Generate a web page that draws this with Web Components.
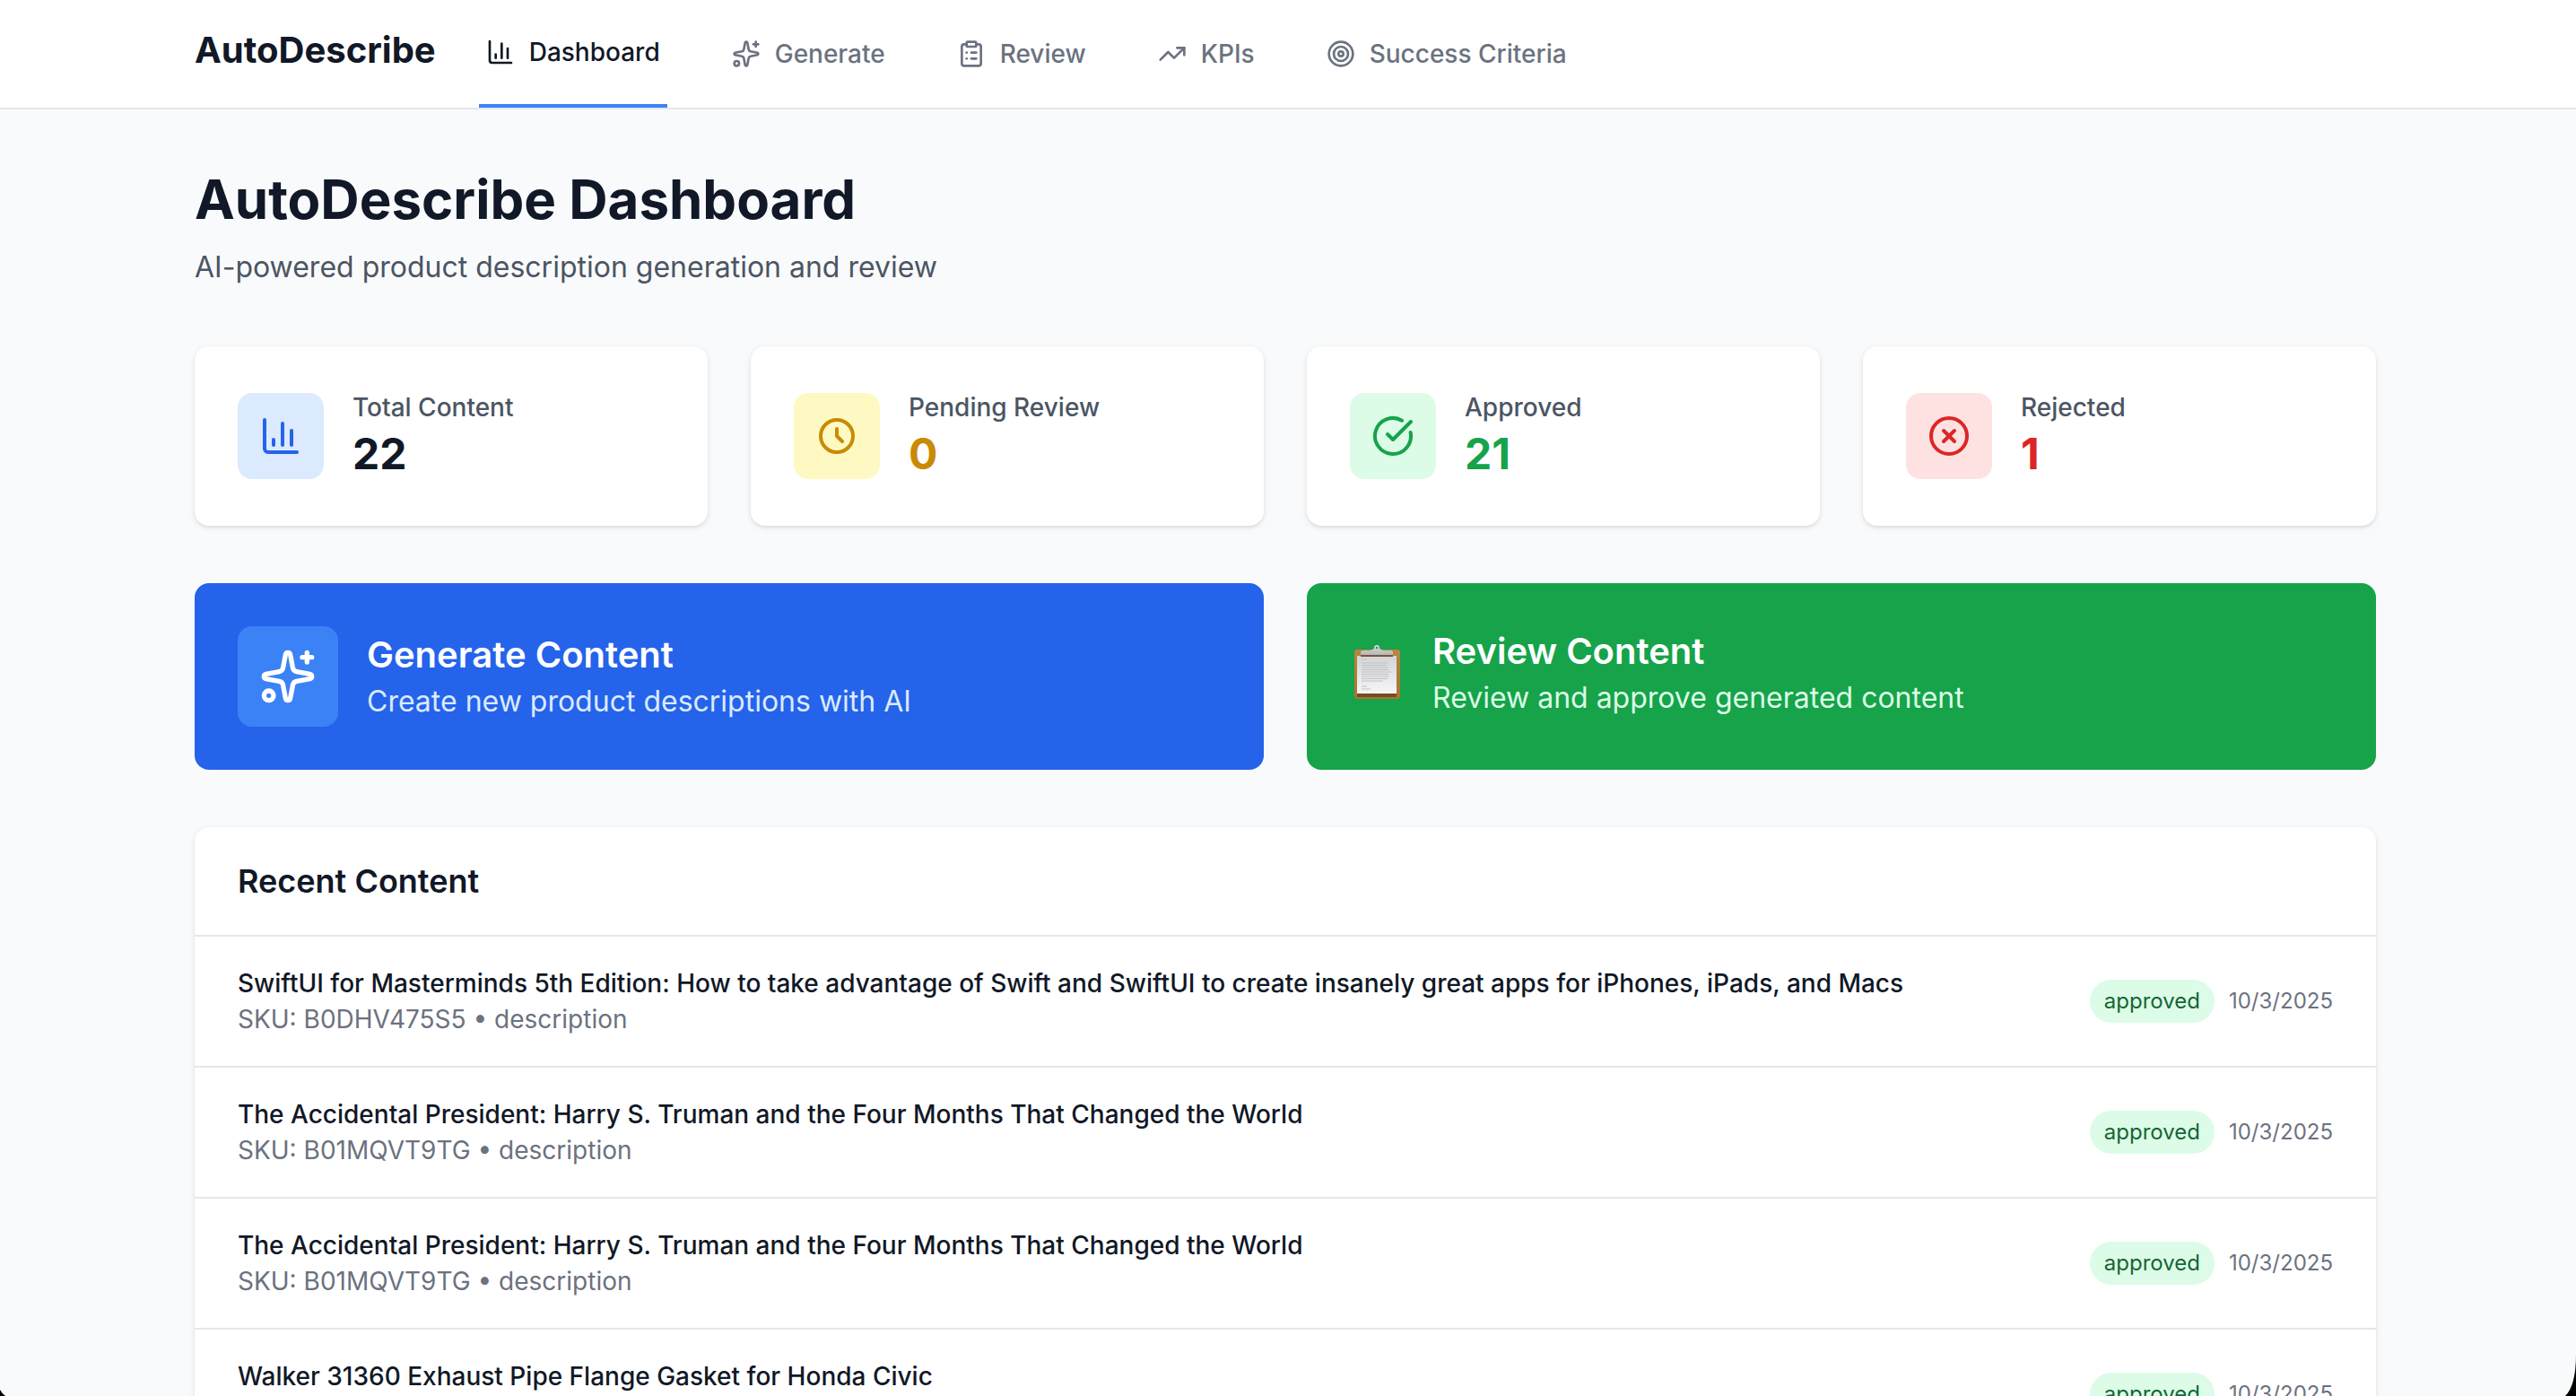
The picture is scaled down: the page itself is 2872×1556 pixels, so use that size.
<!DOCTYPE html>
<html lang="en">
<head>
<meta charset="utf-8">
<meta name="viewport" content="width=device-width, initial-scale=1">
<title>AutoDescribe</title>
<style>
  html, body { margin: 0; height: 100%; }
  body {
    overflow: hidden;
    background: #f9fafb;
    color: #111827;
    font-family: Inter, "Liberation Sans", sans-serif;
    font-size: 28px;
    line-height: 40px;
    -webkit-font-smoothing: antialiased;
  }
</style>
</head>
<body>
<ad-app>
  <ad-nav slot="nav" brand="AutoDescribe">
    <ad-nav-item icon="chart" active>Dashboard</ad-nav-item>
    <ad-nav-item icon="sparkles">Generate</ad-nav-item>
    <ad-nav-item icon="clipboard">Review</ad-nav-item>
    <ad-nav-item icon="trend">KPIs</ad-nav-item>
    <ad-nav-item icon="target">Success Criteria</ad-nav-item>
  </ad-nav>

  <ad-page-title>
    AutoDescribe Dashboard
    <span slot="subtitle">AI-powered product description generation and review</span>
  </ad-page-title>

  <ad-grid columns="4">
    <ad-stat icon="chart" tone="blue" label="Total Content">22</ad-stat>
    <ad-stat icon="clock" tone="yellow" label="Pending Review">0</ad-stat>
    <ad-stat icon="check" tone="green" label="Approved">21</ad-stat>
    <ad-stat icon="cross" tone="red" label="Rejected">1</ad-stat>
  </ad-grid>

  <ad-grid columns="2">
    <ad-action tone="blue">
      <ad-icon slot="icon" name="sparkles"></ad-icon>
      Generate Content
      <span slot="text">Create new product descriptions with AI</span>
    </ad-action>
    <ad-action tone="green">
      <ad-board slot="icon"></ad-board>
      Review Content
      <span slot="text">Review and approve generated content</span>
    </ad-action>
  </ad-grid>

  <ad-recent heading="Recent Content">
    <ad-recent-item status="approved" date="10/3/2025">
      SwiftUI for Masterminds 5th Edition: How to take advantage of Swift and SwiftUI to create insanely great apps for iPhones, iPads, and Macs
      <span slot="meta">SKU: B0DHV475S5 • description</span>
    </ad-recent-item>
    <ad-recent-item status="approved" date="10/3/2025">
      The Accidental President: Harry S. Truman and the Four Months That Changed the World
      <span slot="meta">SKU: B01MQVT9TG • description</span>
    </ad-recent-item>
    <ad-recent-item status="approved" date="10/3/2025">
      The Accidental President: Harry S. Truman and the Four Months That Changed the World
      <span slot="meta">SKU: B01MQVT9TG • description</span>
    </ad-recent-item>
    <ad-recent-item status="approved" date="10/3/2025">
      Walker 31360 Exhaust Pipe Flange Gasket for Honda Civic
    </ad-recent-item>
  </ad-recent>
</ad-app>

<script>
const ICONS = {
  chart: '<path d="M3 3v16a2 2 0 0 0 2 2h16"/><path d="M18 17V9"/><path d="M13 17V5"/><path d="M8 17v-3"/>',
  sparkles: '<path d="M11.017 2.814a1 1 0 0 1 1.966 0l1.051 5.558a2 2 0 0 0 1.594 1.594l5.558 1.051a1 1 0 0 1 0 1.966l-5.558 1.051a2 2 0 0 0-1.594 1.594l-1.051 5.558a1 1 0 0 1-1.966 0l-1.051-5.558a2 2 0 0 0-1.594-1.594l-5.558-1.051a1 1 0 0 1 0-1.966l5.558-1.051a2 2 0 0 0 1.594-1.594z"/><path d="M20 2v4"/><path d="M22 4h-4"/><circle cx="4" cy="20" r="2"/>',
  clipboard: '<rect width="8" height="4" x="8" y="2" rx="1" ry="1"/><path d="M16 4h2a2 2 0 0 1 2 2v14a2 2 0 0 1-2 2H6a2 2 0 0 1-2-2V6a2 2 0 0 1 2-2h2"/><path d="M12 11h4"/><path d="M12 16h4"/><path d="M8 11h.01"/><path d="M8 16h.01"/>',
  trend: '<path d="M16 7h6v6"/><path d="m22 7-8.5 8.5-5-5L2 17"/>',
  target: '<circle cx="12" cy="12" r="10"/><circle cx="12" cy="12" r="6"/><circle cx="12" cy="12" r="2"/>',
  clock: '<path d="M12 8v4l3 3m6-3a9 9 0 1 1-18 0 9 9 0 0 1 18 0z"/>',
  check: '<path d="M21.801 10A10 10 0 1 1 17 3.335"/><path d="m9 11 3 3L22 4"/>',
  cross: '<circle cx="12" cy="12" r="10"/><path d="m15 9-6 6"/><path d="m9 9 6 6"/>'
};

class Base extends HTMLElement {
  connectedCallback() {
    if (!this.shadowRoot) this.attachShadow({ mode: 'open' }).innerHTML = this.view();
  }
  at(name) { return this.getAttribute(name) || ''; }
}

customElements.define('ad-icon', class extends Base {
  view() {
    return `<style>
      :host { display: block; flex: none; width: 32px; height: 32px; }
      svg { display: block; width: 100%; height: 100%; }
    </style>
    <svg viewBox="0 0 24 24" fill="none" stroke="currentColor" stroke-width="2" stroke-linecap="round" stroke-linejoin="round" aria-hidden="true">${ICONS[this.at('name')]}</svg>`;
  }
});

// Full-colour clipboard with a clip, a sheet of paper and a wooden board.
customElements.define('ad-board', class extends Base {
  view() {
    const lines = [20, 22.5, 25, 27.5, 30, 32.5, 35, 37.5, 40].map((y, i) =>
      `<path d="M13 ${y + 1}h${[29, 28, 30, 30, 33, 30, 31, 29, 24][i]}"/>`).join('');
    return `<style>
      :host { display: block; flex: none; width: 60px; height: 64px; }
      svg { display: block; width: 100%; height: 100%; }
    </style>
    <svg viewBox="0 0 60 64" aria-hidden="true">
      <defs>
        <linearGradient id="paper" x1="0" y1="0" x2="0" y2="1"><stop offset="0" stop-color="#d3d4d6"/><stop offset="1" stop-color="#f6f6f8"/></linearGradient>
        <linearGradient id="clip" x1="0" y1="0" x2="0" y2="1"><stop offset="0" stop-color="#d9dbe0"/><stop offset="1" stop-color="#b4b6b8"/></linearGradient>
        <linearGradient id="wood" x1="0" y1="0" x2="0" y2="1"><stop offset="0" stop-color="#b98542"/><stop offset="1" stop-color="#a87433"/></linearGradient>
      </defs>
      <rect x="5" y="6" width="51" height="55" rx="3" fill="url(#wood)"/>
      <path d="M8 55h44v4H8z" fill="#7a4a20"/>
      <path d="M8 13h44v42H8z" fill="url(#paper)"/>
      <path d="M12 12h36v2H12z" fill="#77583a"/>
      <g stroke="#c0c1c3" stroke-width="1" fill="none"><path d="M13 17h6"/>${lines}<path d="M13 47h6M13 50h10"/></g>
      <path d="M22 7q5-1 6-4 2-3 4 0 1 3 6 4z" fill="#a9bfd6"/>
      <path d="M12 12V9q0-2 3-2h8q4-1 4-3 0-3 3-3t3 3q0 2 4 3h8q3 0 3 2v3z" fill="url(#clip)"/>
      <circle cx="30" cy="4" r="1.3" fill="#4f8d5f"/>
    </svg>`;
  }
});

customElements.define('ad-app', class extends Base {
  view() {
    return `<style>
      :host { display: block; min-height: 100%; }
      main {
        display: flex; flex-direction: column; gap: 64px;
        box-sizing: border-box; max-width: 2566px; margin: 0 auto; padding: 64px 70px 64px 64px;
      }
      .corner { position: fixed; bottom: 0; display: block; }
      .left { left: 0; }
      .right { right: 0; }
    </style>
    <slot name="nav"></slot>
    <main><slot></slot></main>
    <svg class="corner left" width="6" height="7" viewBox="0 0 6 7" aria-hidden="true"><path d="M0 0Q2 4 6 7H0z" fill="#000"/></svg>
    <svg class="corner right" width="12" height="46" viewBox="0 0 12 46" aria-hidden="true"><path d="M12 0Q12 34 0 46H12z" fill="#000"/></svg>`;
  }
});

customElements.define('ad-nav', class extends Base {
  view() {
    return `<style>
      :host { display: block; background: #fff; border-bottom: 2px solid #e5e7eb; }
      .bar {
        display: flex; gap: 48px; height: 120px;
        box-sizing: border-box; max-width: 2566px; margin: 0 auto; padding: 0 70px 0 64px;
      }
      .brand { color: #111827; font-size: 40px; font-weight: 700; line-height: 112px; text-decoration: none; }
      nav { display: flex; gap: 64px; }
    </style>
    <div class="bar"><a class="brand" href="#">${this.at('brand')}</a><nav><slot></slot></nav></div>`;
  }
});

customElements.define('ad-nav-item', class extends Base {
  view() {
    return `<style>
      :host { display: flex; }
      a {
        display: flex; align-items: center; gap: 16px; padding: 0 8px;
        color: #6b7280; font-weight: 500; text-decoration: none; white-space: nowrap;
      }
      :host([active]) a { color: #111827; border-bottom: 4px solid #3b82f6; }
    </style>
    <a href="#"><ad-icon name="${this.at('icon')}"></ad-icon><span><slot></slot></span></a>`;
  }
});

customElements.define('ad-page-title', class extends Base {
  view() {
    return `<style>
      :host { display: block; }
      h1 { margin: 0 0 16px; font-size: 60px; line-height: 72px; font-weight: 700; }
      p { margin: 0; color: #4b5563; font-size: 32px; line-height: 48px; }
    </style>
    <h1><slot></slot></h1><p><slot name="subtitle"></slot></p>`;
  }
});

customElements.define('ad-grid', class extends Base {
  view() {
    return `<style>
      :host { display: grid; gap: 48px; grid-template-columns: repeat(${this.at('columns')}, minmax(0, 1fr)); }
    </style><slot></slot>`;
  }
});

const TONES = {
  blue: ['#dbeafe', '#2563eb', '#111827'],
  yellow: ['#fef9c3', '#ca8a04', '#ca8a04'],
  green: ['#dcfce7', '#16a34a', '#16a34a'],
  red: ['#fee2e2', '#dc2626', '#dc2626']
};

customElements.define('ad-stat', class extends Base {
  view() {
    const [tint, ink, value] = TONES[this.at('tone')];
    return `<style>
      :host {
        display: flex; align-items: center; gap: 32px; padding: 48px;
        background: #fff; border-radius: 16px;
        box-shadow: 0 2px 6px rgba(0, 0, 0, .1), 0 2px 4px -2px rgba(0, 0, 0, .1);
      }
      .tile { padding: 24px; border-radius: 16px; background: ${tint}; color: ${ink}; }
      ad-icon { width: 48px; height: 48px; }
      p { margin: 0; }
      .label { color: #4b5563; font-weight: 500; }
      .value { color: ${value}; font-size: 48px; line-height: 64px; font-weight: 700; }
    </style>
    <div class="tile"><ad-icon name="${this.at('icon')}"></ad-icon></div>
    <div><p class="label">${this.at('label')}</p><p class="value"><slot></slot></p></div>`;
  }
});

customElements.define('ad-action', class extends Base {
  view() {
    const blue = this.at('tone') === 'blue';
    return `<style>
      :host { display: grid; }
      a {
        display: block; padding: 48px; border-radius: 16px;
        background: ${blue ? '#2563eb' : '#16a34a'}; color: #fff; text-decoration: none;
      }
      .row { display: flex; align-items: center; gap: 32px; }
      ::slotted(ad-icon) {
        width: 64px; height: 64px; padding: 24px; border-radius: 16px; background: #3b82f6;
      }
      h3 { margin: 0; font-size: 40px; line-height: 56px; font-weight: 600; }
      p { margin: 0; font-size: 32px; line-height: 48px; color: ${blue ? '#dbeafe' : '#dcfce7'}; }
    </style>
    <a href="#"><div class="row"><slot name="icon"></slot><div><h3><slot></slot></h3><p><slot name="text"></slot></p></div></div></a>`;
  }
});

customElements.define('ad-recent', class extends Base {
  view() {
    return `<style>
      :host {
        display: block; background: #fff; border-radius: 16px;
        box-shadow: 0 2px 6px rgba(0, 0, 0, .1), 0 2px 4px -2px rgba(0, 0, 0, .1);
      }
      h2 { margin: 0; padding: 32px 48px; font-size: 36px; line-height: 56px; font-weight: 600; }
    </style>
    <h2>${this.at('heading')}</h2><div role="list"><slot></slot></div>`;
  }
});

customElements.define('ad-recent-item', class extends Base {
  view() {
    return `<style>
      :host {
        display: flex; align-items: center; justify-content: space-between; gap: 32px;
        padding: 32px 48px; border-top: 2px solid #e5e7eb;
      }
      .body { min-height: 80px; }
      h4 { margin: 0; font-size: 28px; line-height: 40px; font-weight: 500; }
      p { margin: 0; color: #6b7280; }
      .side { display: flex; align-items: center; gap: 16px; font-size: 24px; line-height: 32px; white-space: nowrap; }
      .badge { padding: 8px 16px; border-radius: 24px; background: #dcfce7; color: #166534; }
      time { color: #6b7280; }
    </style>
    <div class="body"><h4><slot></slot></h4><p><slot name="meta"></slot></p></div>
    <div class="side"><span class="badge">${this.at('status')}</span><time datetime="2025-10-03">${this.at('date')}</time></div>`;
  }
  connectedCallback() {
    super.connectedCallback();
    this.setAttribute('role', 'listitem');
  }
});
</script>
</body>
</html>
